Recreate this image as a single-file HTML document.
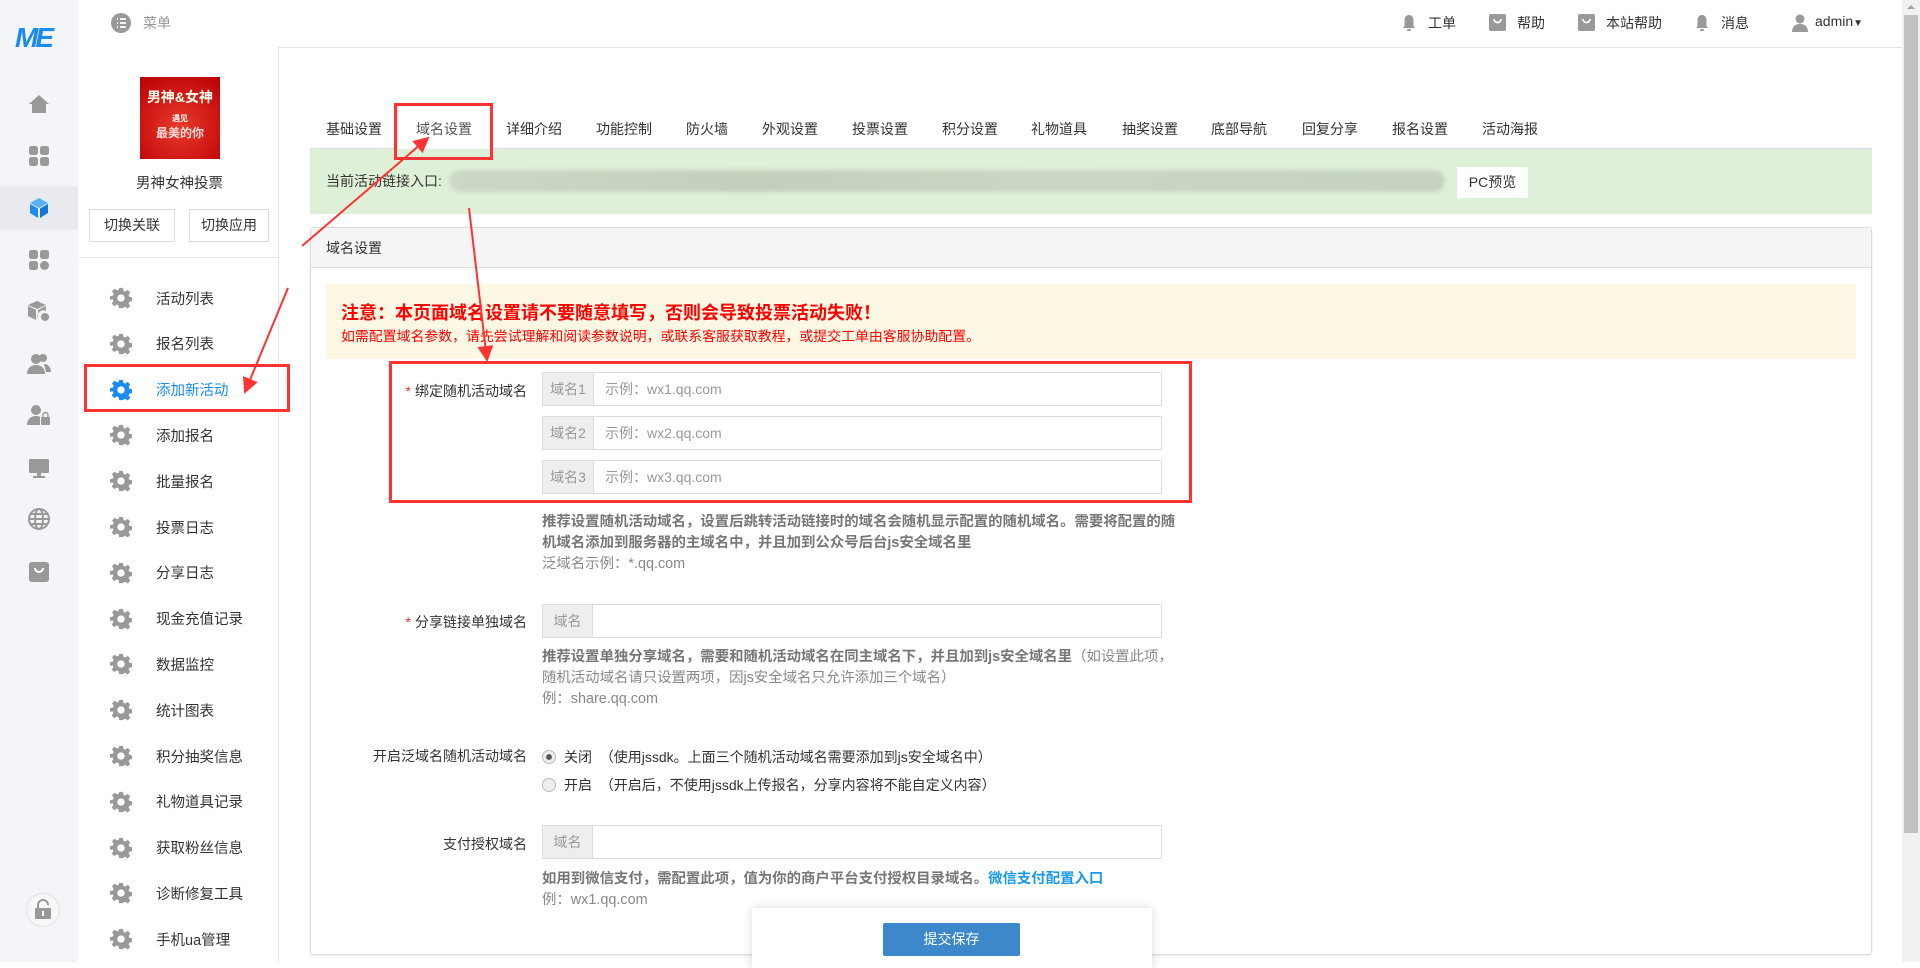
<!DOCTYPE html>
<html><head><meta charset="utf-8"><style>
*{box-sizing:border-box;margin:0;padding:0}
body{width:1920px;height:962px;overflow:hidden;background:#fff;font-family:"Liberation Sans","Noto Sans CJK SC",sans-serif;font-size:14px;color:#333;position:relative}
.a{position:absolute;white-space:nowrap}
.lb{left:0;top:0;width:78px;height:962px;background:#f4f5f8}
.ic{position:absolute;left:27px;width:24px;height:24px}
.sb2{left:78px;top:47px;width:201px;height:915px;background:#fff;border-right:1px solid #e6e6e6}
.mi{position:absolute;left:110px;height:24px;display:flex;align-items:center;font-size:14.5px;color:#333}
.mi svg{margin-right:24px}
.tab{position:absolute;top:119px;font-size:14px;color:#333}
.inp{position:absolute;left:542px;width:620px;height:34px;border:1px solid #ddd;background:#fff}
.inp .ad{position:absolute;left:0;top:0;width:51px;height:32px;background:#eee;border-right:1px solid #ddd;color:#999;font-size:14px;line-height:32px;text-align:center}
.inp .ph{position:absolute;left:62px;top:0;line-height:32px;color:#999;font-size:14px}
.lab{position:absolute;right:1393px;font-size:14px;color:#333;white-space:nowrap}
.lab i{color:#e33;font-style:normal;margin-right:4px}
.help{position:absolute;left:542px;font-size:14.4px;color:#888;line-height:21px}
.help b{color:#777}
</style></head><body>
<div class="a lb"></div>
<div class="a" style="left:15px;top:22px;font:italic 900 28px 'Liberation Sans',sans-serif;color:#1a8cf0;letter-spacing:-3px">ME</div>
<div class="a" style="left:0;top:186px;width:78px;height:44px;background:#e9eaef"></div>
<svg class="ic" style="top:92px" viewBox="0 0 24 24"><path d="M12 3 2 12h3v9h14v-9h3z" fill="#999"/></svg>
<svg class="ic" style="top:144px" viewBox="0 0 24 24" fill="#999"><rect x="2" y="2" width="9" height="9" rx="2.5"/><rect x="13" y="2" width="9" height="9" rx="2.5"/><rect x="2" y="13" width="9" height="9" rx="2.5"/><rect x="13" y="13" width="9" height="9" rx="2.5"/></svg>
<svg class="ic" style="top:196px" viewBox="0 0 24 24"><path d="M12 2 21 7 12 12 3 7z" fill="#5ab0f7"/><path d="M3 8 11 12.5V22L3 17z" fill="#1a8cf0"/><path d="M21 8 13 12.5V22L21 17z" fill="#1578d8"/></svg>
<svg class="ic" style="top:248px" viewBox="0 0 24 24" fill="#999"><rect x="2" y="2" width="9" height="9" rx="2.5"/><rect x="13" y="2" width="9" height="9" rx="2.5"/><rect x="2" y="13" width="9" height="9" rx="2.5"/><circle cx="17.5" cy="17.5" r="4.5"/></svg>
<svg class="ic" style="top:299px" viewBox="0 0 24 24" fill="#999"><path d="M10 2 19 6 10 10 1 6z"/><path d="M1 7 9 11v10L1 17z"/><path d="M11 11 19 7v5a6 6 0 0 0-8 8z"/><circle cx="18" cy="18" r="4"/></svg>
<svg class="ic" style="top:352px" viewBox="0 0 24 24" fill="#999"><circle cx="9" cy="7" r="5"/><path d="M0 22c0-6 4-9 9-9s9 3 9 9z"/><circle cx="16" cy="6" r="4"/><path d="M17 12c4 0 7 3 7 8h-5z"/></svg>
<svg class="ic" style="top:403px" viewBox="0 0 24 24" fill="#999"><circle cx="9" cy="7" r="5"/><path d="M0 22c0-6 4-9 9-9 2 0 3 .3 4 .8V22z"/><rect x="14" y="14" width="9" height="8" rx="1"/><path d="M16 14v-2a2.5 2.5 0 0 1 5 0v2" stroke="#999" stroke-width="1.5" fill="none"/></svg>
<svg class="ic" style="top:456px" viewBox="0 0 24 24" fill="#999"><rect x="2" y="3" width="20" height="14" rx="1.5"/><rect x="10" y="17" width="4" height="3"/><rect x="6" y="20" width="12" height="2"/></svg>
<svg class="ic" style="top:507px" viewBox="0 0 24 24" fill="none" stroke="#999" stroke-width="2"><circle cx="12" cy="12" r="10"/><ellipse cx="12" cy="12" rx="4" ry="10"/><path d="M2 12h20M4 7h16M4 17h16"/></svg>
<svg class="ic" style="top:560px" viewBox="0 0 24 24"><rect x="2" y="2" width="20" height="20" rx="3" fill="#999"/><path d="M8 8a4 4 0 0 0 8 0" stroke="#fff" stroke-width="2" fill="none"/></svg>
<div class="a" style="left:26px;top:893px;width:34px;height:34px;border-radius:50%;border:1px solid #e3e3e3;background:#f7f7f7"></div>
<svg class="a" style="left:34px;top:899px" width="18" height="20" viewBox="0 0 18 20"><path d="M4 9V6a5 5 0 0 1 10 0" stroke="#999" stroke-width="2" fill="none"/><rect x="1" y="9" width="16" height="11" rx="1" fill="#999"/><rect x="8" y="12" width="2" height="5" fill="#fff"/></svg>

<div class="a" style="left:78px;top:47px;width:1824px;height:1px;background:#e6e6e6"></div>
<svg class="a" style="left:111px;top:13px" width="20" height="20" viewBox="0 0 20 20"><circle cx="10" cy="10" r="10" fill="#999"/><path d="M6 6h1M9 6h6M6 10h1M9 10h6M6 14h1M9 14h6" stroke="#fff" stroke-width="1.8"/></svg>
<div class="a" style="left:143px;top:13px;color:#999;font-size:14px">菜单</div>
<svg class="a" style="left:1402px;top:14px" width="14" height="18" viewBox="0 0 14 18" fill="#999"><path d="M7 1C3.5 1 2.5 4 2.5 7v5L1 14h12l-1.5-2V7C11.5 4 10.5 1 7 1z"/><rect x="5" y="15" width="4" height="2" rx="1"/></svg>
<div class="a" style="left:1428px;top:13px;font-size:14px">工单</div>
<svg class="a" style="left:1489px;top:14px" width="17" height="17" viewBox="0 0 17 17"><rect width="17" height="17" rx="2" fill="#999"/><path d="M5 5a3.5 3.5 0 0 0 7 0" stroke="#fff" stroke-width="1.8" fill="none"/></svg>
<div class="a" style="left:1517px;top:13px;font-size:14px">帮助</div>
<svg class="a" style="left:1578px;top:14px" width="17" height="17" viewBox="0 0 17 17"><rect width="17" height="17" rx="2" fill="#999"/><path d="M5 5a3.5 3.5 0 0 0 7 0" stroke="#fff" stroke-width="1.8" fill="none"/></svg>
<div class="a" style="left:1606px;top:13px;font-size:14px">本站帮助</div>
<svg class="a" style="left:1695px;top:14px" width="14" height="18" viewBox="0 0 14 18" fill="#999"><path d="M7 1C3.5 1 2.5 4 2.5 7v5L1 14h12l-1.5-2V7C11.5 4 10.5 1 7 1z"/><rect x="5" y="15" width="4" height="2" rx="1"/></svg>
<div class="a" style="left:1721px;top:13px;font-size:14px">消息</div>
<svg class="a" style="left:1792px;top:14px" width="16" height="18" viewBox="0 0 16 18" fill="#999"><circle cx="8" cy="5" r="4.5"/><path d="M0 18c0-5 3-8 8-8s8 3 8 8z"/></svg>
<div class="a" style="left:1815px;top:13px;font-size:14px">admin<span style="font-size:10px">▼</span></div>
<div class="a" style="left:1902px;top:0;width:18px;height:962px;background:#f1f1f1"></div>
<div class="a" style="left:1907px;top:5px;width:0;height:0;border-left:4px solid transparent;border-right:4px solid transparent;border-bottom:4px solid #a3a3a3"></div>
<div class="a" style="left:1904px;top:15px;width:14px;height:818px;background:#c1c1c1"></div>

<div class="a sb2"></div>
<div class="a" style="left:140px;top:77px;width:80px;height:82px;background:radial-gradient(circle at 50% 60%,#e83a2a,#c81010 70%,#b00 100%);color:#fff;font-weight:bold;text-align:center">
<div style="font-size:14px;margin-top:10px;color:#ffe">男神&amp;女神</div><div style="font-size:8px;margin-top:6px">遇见</div><div style="font-size:12px;color:#fdd">最美的你</div></div>
<div class="a" style="left:79px;top:172px;width:201px;text-align:center;font-size:14.5px">男神女神投票</div>
<div class="a" style="left:89px;top:209px;width:86px;height:33px;border:1px solid #ddd;text-align:center;line-height:31px;font-size:14px">切换关联</div>
<div class="a" style="left:189px;top:209px;width:80px;height:33px;border:1px solid #ddd;text-align:center;line-height:31px;font-size:14px">切换应用</div>
<div class="a" style="left:79px;top:257px;width:200px;height:1px;background:#e6e6e6"></div>
<div id="menu"></div>

<div class="a" style="left:310px;top:148px;width:1562px;height:1px;background:#ddd"></div>
<div class="a" style="left:397px;top:104px;width:94px;height:45px;border:1px solid #ddd;border-bottom:1px solid #fff;border-radius:3px 3px 0 0;background:#fff"></div>
<div class="tab" style="left:326px">基础设置</div>
<div class="tab" style="left:416px;color:#555">域名设置</div>
<div class="tab" style="left:506px">详细介绍</div>
<div class="tab" style="left:596px">功能控制</div>
<div class="tab" style="left:686px">防火墙</div>
<div class="tab" style="left:762px">外观设置</div>
<div class="tab" style="left:852px">投票设置</div>
<div class="tab" style="left:942px">积分设置</div>
<div class="tab" style="left:1031px">礼物道具</div>
<div class="tab" style="left:1122px">抽奖设置</div>
<div class="tab" style="left:1211px">底部导航</div>
<div class="tab" style="left:1302px">回复分享</div>
<div class="tab" style="left:1392px">报名设置</div>
<div class="tab" style="left:1482px">活动海报</div>

<div class="a" style="left:310px;top:149px;width:1562px;height:65px;background:#dff0d8"></div>
<div class="a" style="left:326px;top:171px;font-size:14px;color:#333">当前活动链接入口:</div>
<div class="a" style="left:449px;top:170px;width:996px;height:22px;border-radius:11px;background:linear-gradient(90deg,#ccd8c6,#c3d0bd 30%,#cbd6c4 60%,#c6d2c0);filter:blur(2px)"></div>
<div class="a" style="left:1457px;top:167px;width:71px;height:31px;background:#fff;text-align:center;line-height:31px;font-size:14px">PC预览</div>

<div class="a" style="left:310px;top:227px;width:1562px;height:728px;border:1px solid #ddd;border-radius:3px;box-shadow:0 1px 2px rgba(0,0,0,.08)"></div>
<div class="a" style="left:311px;top:228px;width:1560px;height:40px;background:#f5f5f5;border-bottom:1px solid #ddd"></div>
<div class="a" style="left:326px;top:238px;font-size:14px">域名设置</div>
<div class="a" style="left:326px;top:284px;width:1530px;height:75px;background:#fcf8e3"></div>
<div class="a" style="left:341px;top:299px;font-size:18px;font-weight:bold;color:#f00">注意：本页面域名设置请不要随意填写，否则会导致投票活动失败！</div>
<div class="a" style="left:341px;top:326px;font-size:13.9px;color:#f00">如需配置域名参数，请先尝试理解和阅读参数说明，或联系客服获取教程，或提交工单由客服协助配置。</div>

<div class="lab" style="top:381px"><i>*</i>绑定随机活动域名</div>
<div class="inp" style="top:372px"><div class="ad">域名1</div><div class="ph">示例：wx1.qq.com</div></div>
<div class="inp" style="top:416px"><div class="ad">域名2</div><div class="ph">示例：wx2.qq.com</div></div>
<div class="inp" style="top:460px"><div class="ad">域名3</div><div class="ph">示例：wx3.qq.com</div></div>
<div class="help" style="top:512px"><b>推荐设置随机活动域名，设置后跳转活动链接时的域名会随机显示配置的随机域名。需要将配置的随<br>机域名添加到服务器的主域名中，并且加到公众号后台js安全域名里</b><br>泛域名示例：*.qq.com</div>

<div class="lab" style="top:612px"><i>*</i>分享链接单独域名</div>
<div class="inp" style="top:604px"><div class="ad" style="width:50px">域名</div></div>
<div class="help" style="top:647px"><b>推荐设置单独分享域名，需要和随机活动域名在同主域名下，并且加到js安全域名里</b>（如设置此项，<br>随机活动域名请只设置两项，因js安全域名只允许添加三个域名）<br>例：share.qq.com</div>

<div class="lab" style="top:746px">开启泛域名随机活动域名</div>
<div class="a" style="left:542px;top:747px;font-size:14px;color:#333"><span style="display:inline-block;width:14px;height:14px;border-radius:50%;border:1px solid #bbb;background:radial-gradient(#555 30%,#eee 38%);vertical-align:-2px;margin-right:8px"></span>关闭 &nbsp;（使用jssdk。上面三个随机活动域名需要添加到js安全域名中）</div>
<div class="a" style="left:542px;top:775px;font-size:14px;color:#333"><span style="display:inline-block;width:14px;height:14px;border-radius:50%;border:1px solid #bbb;background:#eee;vertical-align:-2px;margin-right:8px"></span>开启 &nbsp;（开启后，不使用jssdk上传报名，分享内容将不能自定义内容）</div>

<div class="lab" style="top:834px">支付授权域名</div>
<div class="inp" style="top:825px"><div class="ad" style="width:50px">域名</div></div>
<div class="help" style="top:869px"><b>如用到微信支付，需配置此项，值为你的商户平台支付授权目录域名。<span style="color:#1a9ae8">微信支付配置入口</span></b><br>例：wx1.qq.com</div>

<div class="a" style="left:752px;top:908px;width:400px;height:60px;background:#fff;box-shadow:0 0 10px rgba(0,0,0,.15)"></div>
<div class="a" style="left:883px;top:923px;width:137px;height:33px;background:#3d87cb;border-radius:2px;color:#fff;text-align:center;line-height:33px;font-size:14px">提交保存</div>

<div class="a" style="left:394px;top:103px;width:99px;height:57px;border:3px solid #f33"></div>
<div class="a" style="left:84px;top:364px;width:206px;height:48px;border:3px solid #f33"></div>
<div class="a" style="left:389px;top:361px;width:803px;height:142px;border:3px solid #f33"></div>
<svg class="a" style="left:0;top:0" width="1920" height="962">
<defs><marker id="m" markerWidth="8" markerHeight="8" refX="7" refY="4" orient="auto"><path d="M0 0 8 4 0 8z" fill="#f33"/></marker></defs>
<g stroke="#f33" stroke-width="2" fill="none" marker-end="url(#m)">
<line x1="288" y1="288" x2="245" y2="392"/>
<line x1="302" y1="246" x2="428" y2="138"/>
<line x1="469" y1="208" x2="487" y2="360"/>
</g></svg>
<script>
var it=["活动列表","报名列表","添加新活动","添加报名","批量报名","投票日志","分享日志","现金充值记录","数据监控","统计图表","积分抽奖信息","礼物道具记录","获取粉丝信息","诊断修复工具","手机ua管理"];
var h="";it.forEach(function(t,i){var y=286+i*45.8;var c=i==2?"#1a8cf0":"#999";
h+='<div class="mi" style="top:'+y+'px;color:'+(i==2?"#1a8cf0":"#333")+'"><svg width="22" height="22" viewBox="0 0 24 24"><path fill="'+c+'" d="M10 1h4l.6 3.1 2 .9 2.7-1.8 2.8 2.8-1.8 2.7.9 2 3.1.6v4l-3.1.6-.9 2 1.8 2.7-2.8 2.8-2.7-1.8-2 .9L14 23h-4l-.6-3.1-2-.9-2.7 1.8-2.8-2.8 1.8-2.7-.9-2L0 14v-4l3.1-.6.9-2L2.2 4.7 5 1.9l2.7 1.8 2-.9z"/><circle cx="12" cy="12" r="4" fill="#fff"/></svg>'+t+'</div>';});
document.getElementById("menu").innerHTML=h;
</script>
</body></html>
